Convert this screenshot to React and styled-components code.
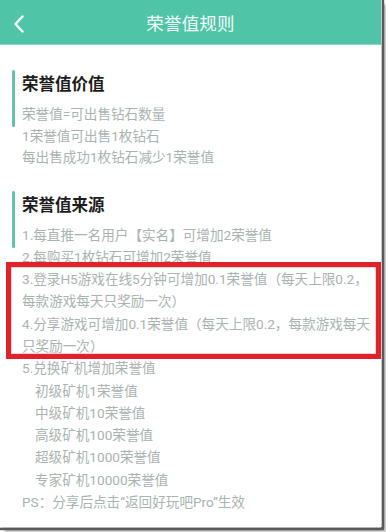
import React from "react";
import styled, { createGlobalStyle } from "styled-components";

const Global = createGlobalStyle`
  html, body { margin: 0; padding: 0; background: #ffffff; }
  body { font-family: "Roboto", "Noto Sans CJK SC", "Noto Sans", sans-serif; }
  * { box-sizing: border-box; }
`;

const Stage = styled.div`
  width: 386px;
  height: 532px;
  background: #ffffff;
  overflow: hidden;
`;

const Frame = styled.div`
  width: 381px;
  height: 527px;
  background: #ffffff;
  box-shadow: 1px 0 0 #c8c8c8, 3px 0 1px #5a5a5a, 0 1px 0 #c8c8c8, 0 3px 1px #5a5a5a,
    3px 3px 1px #5a5a5a, 5px 5px 2px rgba(0, 0, 0, 0.25);
  display: flex;
  flex-direction: column;
`;

const Header = styled.header`
  height: 45px;
  flex: none;
  background: #4fc4a6;
  border-bottom: 1px solid #86d9c3;
  display: flex;
  align-items: center;
  justify-content: center;
  position: relative;
`;

const Back = styled.button`
  position: absolute;
  left: 10px;
  top: 12px;
  width: 18px;
  height: 24px;
  padding: 0;
  border: 0;
  background: transparent;
  display: flex;
  align-items: center;
  justify-content: center;
`;

const Title = styled.h1`
  margin: 0;
  font-size: 17.5px;
  font-weight: 400;
  color: #f4fffb;
  letter-spacing: 0.2px;
`;

const Content = styled.main`
  padding: 25px 0 0 12px;
  display: flex;
  flex-direction: column;
  gap: 22px;
`;

const Section = styled.section`
  position: relative;
  padding-left: 10px;
  &::before {
    content: "";
    position: absolute;
    left: 0;
    top: 0;
    width: 3px;
    height: 57px;
    border-radius: 2px;
    background: #62c4a9;
  }
`;

const SectionTitle = styled.h2`
  margin: 3px 0 ${(p) => p.$gap}px;
  font-size: 16.5px;
  line-height: 24px;
  font-weight: 700;
  color: #1d1d1d;
`;

const Line = styled.p`
  margin: 0;
  font-size: 13.6px;
  line-height: ${(p) => p.$lh}px;
  color: #a9b3b0;
  white-space: nowrap;
  padding-left: ${(p) => (p.$indent ? 13 : 0)}px;
`;

const Highlight = styled.div`
  position: relative;
  &::after {
    content: "";
    position: absolute;
    left: -16px;
    right: 0;
    top: -6px;
    bottom: -2px;
    border: 5px solid #e1222b;
    box-shadow: inset 0 0 0 1px #f3d2d2;
    pointer-events: none;
  }
`;

const valueLines = [
  "荣誉值=可出售钻石数量",
  "1荣誉值可出售1枚钻石",
  "每出售成功1枚钻石减少1荣誉值",
];

const minerLines = [
  "初级矿机1荣誉值",
  "中级矿机10荣誉值",
  "高级矿机100荣誉值",
  "超级矿机1000荣誉值",
  "专家矿机10000荣誉值",
];

export default function App() {
  const lh = 22.3;
  return (
    <>
      <Global />
      <Stage>
        <Frame>
          <Header>
            <Back aria-label="返回">
              <svg width="12" height="20" viewBox="0 0 12 20">
                <polyline
                  points="9.5,2.5 2.5,10 9.5,17.5"
                  fill="none"
                  stroke="#f4fffb"
                  strokeWidth="2.4"
                  strokeLinecap="round"
                  strokeLinejoin="round"
                />
              </svg>
            </Back>
            <Title>荣誉值规则</Title>
          </Header>
          <Content>
            <Section>
              <SectionTitle $gap={7}>荣誉值价值</SectionTitle>
              {valueLines.map((t) => (
                <Line key={t} $lh={21.5}>
                  {t}
                </Line>
              ))}
            </Section>
            <Section>
              <SectionTitle $gap={6}>荣誉值来源</SectionTitle>
              <Line $lh={lh}>1.每直推一名用户【实名】可增加2荣誉值</Line>
              <Line $lh={lh}>2.每购买1枚钻石可增加2荣誉值</Line>
              <Highlight>
                <Line $lh={lh}>
                  3.登录H5游戏在线5分钟可增加0.1荣誉值（每天上限0.2，
                  <br />
                  每款游戏每天只奖励一次）
                </Line>
                <Line $lh={lh}>
                  4.分享游戏可增加0.1荣誉值（每天上限0.2，每款游戏每天
                  <br />
                  只奖励一次）
                </Line>
              </Highlight>
              <Line $lh={lh}>5.兑换矿机增加荣誉值</Line>
              {minerLines.map((t) => (
                <Line key={t} $lh={lh} $indent>
                  {t}
                </Line>
              ))}
              <Line $lh={lh}>PS：分享后点击“返回好玩吧Pro”生效</Line>
            </Section>
          </Content>
        </Frame>
      </Stage>
    </>
  );
}
